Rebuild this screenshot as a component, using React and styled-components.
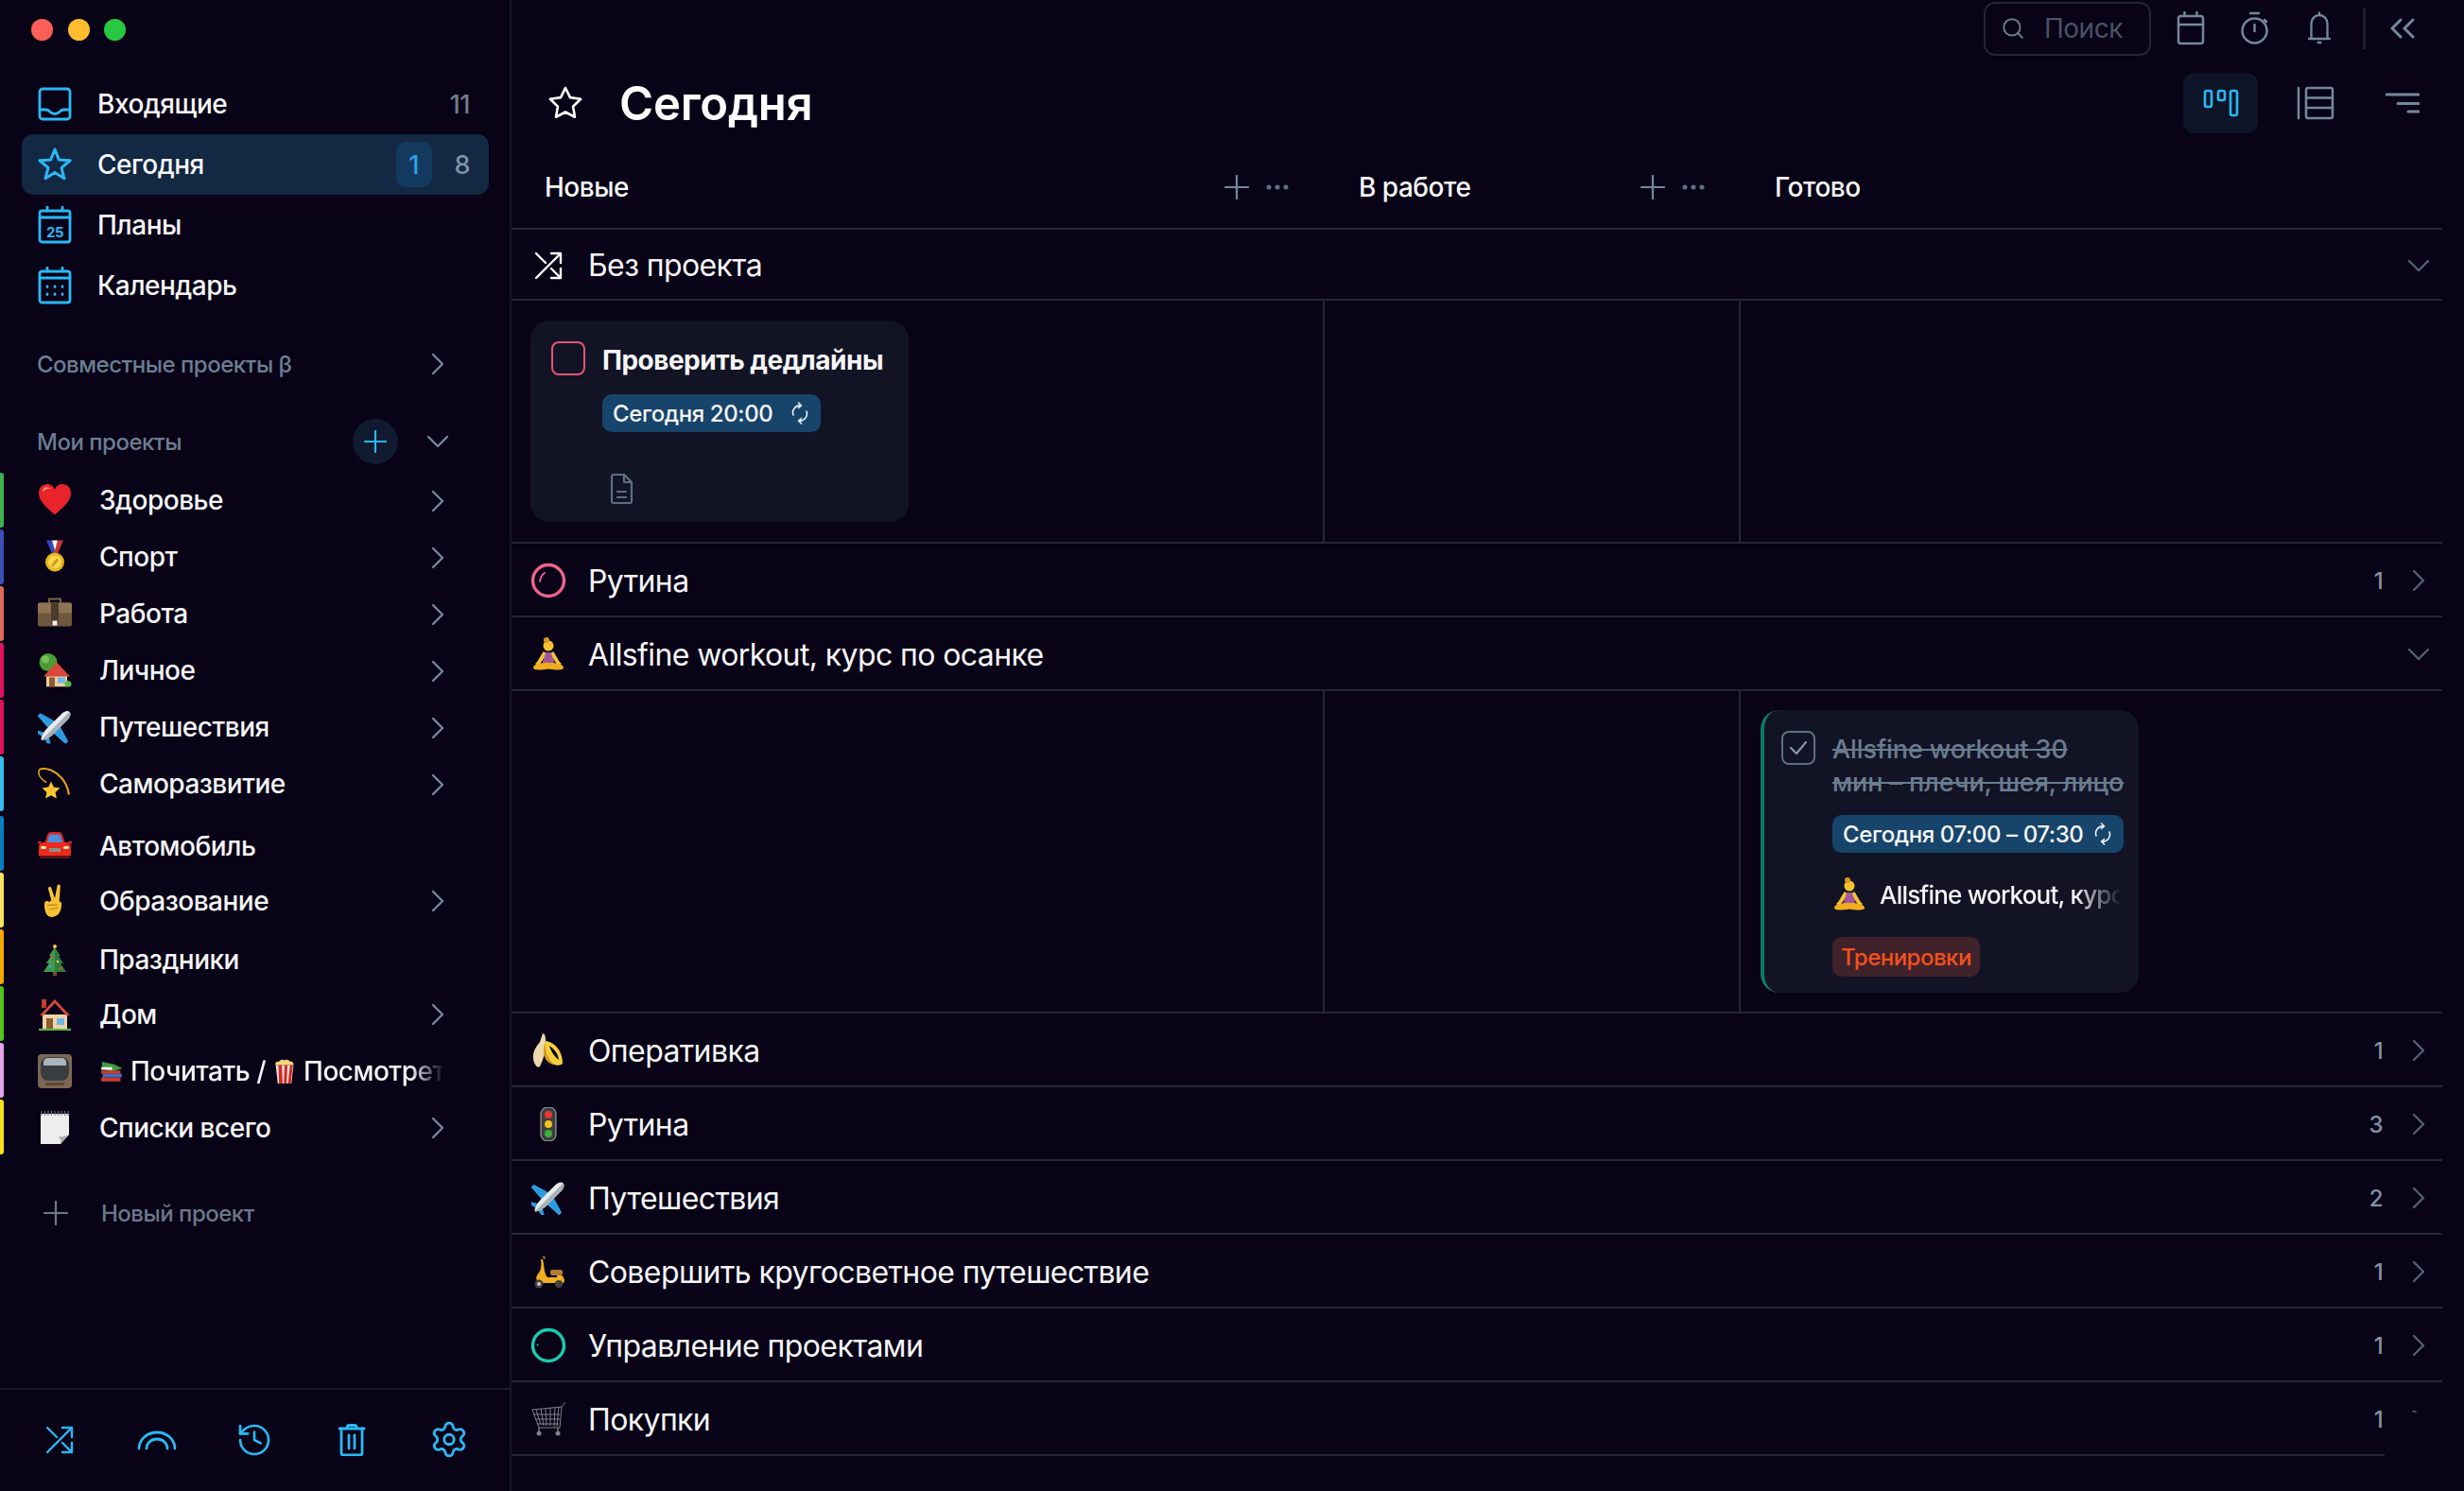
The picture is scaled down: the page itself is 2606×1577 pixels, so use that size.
import React from "react";
import styled, { createGlobalStyle } from "styled-components";
import { History, Settings, Search } from "lucide-react";

const CYAN = "#2bb8f4";
const GREY = "#75889b";
const LINE = "#25263a";

const GlobalStyle = createGlobalStyle`
  html, body { margin: 0; padding: 0; background: #080317; }
  * { box-sizing: border-box; }
  body { font-family: Inter, "Noto Sans", sans-serif; color: #f6f6f8; letter-spacing: -0.5px; }
`;

const starPoints = (cx, cy, R, r) =>
  Array.from({ length: 10 }, (_, i) => {
    const rad = i % 2 ? r : R;
    const a = (Math.PI / 5) * i - Math.PI / 2;
    return `${(cx + rad * Math.cos(a)).toFixed(2)},${(cy + rad * Math.sin(a)).toFixed(2)}`;
  }).join(" ");

/* ---- line icons ---- */
const Line = styled.svg`
  display: block;
  flex: none;
  fill: none;
  stroke: ${({ $c }) => $c || GREY};
  stroke-width: ${({ $w }) => $w || 2.5};
  stroke-linecap: round;
  stroke-linejoin: round;
`;

const Ico = ({ w = 34, h = w, c, sw, children }) => (
  <Line width={w} height={h} viewBox={`0 0 ${w} ${h}`} $c={c} $w={sw}>
    {children}
  </Line>
);

const InboxIcon = () => (
  <Ico w={36} h={36} c={CYAN} sw={2.8}>
    <rect x="2" y="2" width="32" height="32" rx="3" />
    <path d="M2 24h7c3.500 0 4 4.500 9 4.500s5.500-4.500 9-4.500h7" />
  </Ico>
);
const StarIcon = () => (
  <Ico w={38} h={38} c={CYAN} sw={3}>
    <polygon points={starPoints(19, 20, 17, 7.4)} />
  </Ico>
);
const Twenty = styled.text`
  fill: ${CYAN};
  stroke: none;
  font: 700 15px Inter, sans-serif;
  text-anchor: middle;
`;
const PlansIcon = () => (
  <Ico w={36} h={40} c={CYAN} sw={2.8}>
    <rect x="2" y="5" width="32" height="33" rx="2.500" />
    <path d="M2 12h32M10 1v4M26 1v4" />
    <Twenty x="18" y="33">25</Twenty>
  </Ico>
);
const CalendarIcon = () => (
  <Ico w={36} h={40} c={CYAN} sw={2.8}>
    <rect x="2" y="5" width="32" height="33" rx="2.500" />
    <path d="M2 12h32M10 1v4M26 1v4" />
    <path d="M10 21v.5M18 21v.5M26 21v.5M10 29v.5M18 29v.5M26 29v.5" />
  </Ico>
);
const ShuffleIcon = ({ c }) => (
  <Ico w={30} h={30} c={c} sw={2.4}>
    <path d="M2 28 28 2M18 2h10v10M2 2l10 10M18 18l10 10M28 18v10H18" />
  </Ico>
);
const RainbowIcon = () => (
  <Ico w={42} h={22} c={CYAN} sw={2.8}>
    <path d="M2 20a19 17 0 0 1 38 0M10 20a11 10 0 0 1 22 0" />
  </Ico>
);
const TrashIcon = () => (
  <Ico w={30} h={34} c={CYAN} sw={2.8}>
    <path d="M2 5h26M10 4c0-2 1-2.500 2-2.500h6c1 0 2 .5 2 2.500" />
    <path d="M4 5v26a2 2 0 0 0 2 2h18a2 2 0 0 0 2-2V5" />
    <path d="M12 12v14M18 12v14" />
  </Ico>
);
const ChevronRight = () => (
  <Ico w={14} h={24} c={GREY} sw={2.4}>
    <path d="M2 2l10 10L2 22" />
  </Ico>
);
const ChevronDown = ({ c }) => (
  <Ico w={24} h={14} c={c || GREY} sw={2.4}>
    <path d="M2 2l10 10L22 2" />
  </Ico>
);
const ChevronStub = () => (
  <Ico w={24} h={24} c={GREY} sw={1.6}>
    <path d="M6 3.500l3 1" />
  </Ico>
);
const Cross = ({ s = 26, c = GREY, sw = 2.2 }) => (
  <Ico w={s} h={s} c={c} sw={sw}>
    <path d={`M${s / 2} 1v${s - 2}M1 ${s / 2}h${s - 2}`} />
  </Ico>
);
const Dots = () => (
  <Ico w={24} h={8} c="#5f7082" sw={5}>
    <path d="M3 4h.01M12 4h.01M21 4h.01" />
  </Ico>
);
const SyncIcon = () => (
  <Ico w={20} h={24} c="#eaf2f8" sw={1.6}>
    <path d="M3 14a7.500 7.500 0 0 1 8-10M8.500 1l3 3-3 2.500" />
    <path d="M17 10a7.500 7.500 0 0 1-8 10M11.500 23l-3-3 3-2.500" />
  </Ico>
);
const DocIcon = () => (
  <Ico w={25} h={32} c="#5e6e80" sw={2.2}>
    <path d="M2 3a2 2 0 0 1 2-2h11l8 8v20a2 2 0 0 1-2 2H4a2 2 0 0 1-2-2z" />
    <path d="M15 1v8h8M8 19h9M8 25h9" />
  </Ico>
);
const TopCalendar = () => (
  <Ico w={30} h={36}>
    <rect x="2" y="5" width="26" height="29" rx="2.500" />
    <path d="M2 14h26M8.500 1v4M21.500 1v4" />
  </Ico>
);
const StopwatchIcon = () => (
  <Ico w={32} h={36}>
    <circle cx="15.500" cy="20.500" r="13" />
    <path d="M11 2h9M15.500 14v7M26 9l2 2" />
  </Ico>
);
const BellIcon = () => (
  <Ico w={28} h={36} sw={2.3}>
    <path d="M3 29h22M5.500 29V13a8.500 9 0 0 1 17 0v16M14 1.500v2M12.500 33h3" />
  </Ico>
);
const CollapseIcon = () => (
  <Ico w={28} h={24} sw={3}>
    <path d="M12 3l-9 9 9 9M25 3l-9 9 9 9" />
  </Ico>
);
const KanbanIcon = () => (
  <Ico w={38} h={30} c={CYAN} sw={2.6}>
    <rect x="2" y="2" width="7" height="17" rx="2" />
    <rect x="16" y="2" width="7" height="10" rx="2" />
    <rect x="29" y="2" width="7" height="26" rx="2" />
  </Ico>
);
const ListIcon = () => (
  <Ico w={40} h={36}>
    <path d="M2 2v32" />
    <rect x="10" y="2" width="28" height="32" rx="2" />
    <path d="M10 12.500h28M10 23h28" />
  </Ico>
);
const FilterIcon = () => (
  <Ico w={36} h={24} sw={3}>
    <path d="M1 3h34M13 12.500h22M24 21h11" />
  </Ico>
);

/* ---- emoji drawn by hand, no colour emoji font in the sandbox ---- */
const EmojiSvg = styled.svg`
  display: block;
  flex: none;
`;
const Em = ({ s = 36, children }) => (
  <EmojiSvg width={s} height={s} viewBox="0 0 36 36">
    {children}
  </EmojiSvg>
);

const Heart = () => (
  <Em>
    <path d="M18 34C8 25 1 19 1 11 1 5 5.500 1.500 10 1.500c4 0 7 2.500 8 6 1-3.500 4-6 8-6 4.500 0 9 3.500 9 9.500 0 8-7 14-17 23z" fill="#e8232a" />
    <path d="M6 6c3-2.500 7-1 8 1-3-1-6-.5-8 2.500-1 1-1-2 0-3.500z" fill="#ff8a80" />
  </Em>
);
const Medal = () => (
  <Em>
    <path d="M9 1h6l4 14h-4z" fill="#2f49b5" />
    <path d="M27 1h-6l-4 14h4z" fill="#c8342d" />
    <path d="M15 1h6l-3 11z" fill="#f4f4f4" />
    <circle cx="18" cy="24" r="10" fill="#e6b520" />
    <circle cx="18" cy="24" r="7" fill="#f7d64a" />
    <path d="M14 28l6-8 2 2-6 7z" fill="#c9981a" />
  </Em>
);
const Briefcase = () => (
  <Em>
    <path d="M12 7V3h12v4" fill="none" stroke="#7a6248" strokeWidth="2" />
    <rect x="0" y="7" width="36" height="25" rx="2" fill="#6e573c" />
    <rect x="0" y="7" width="36" height="11" rx="2" fill="#8e7454" />
    <rect x="14" y="7" width="8" height="23" fill="#4c3b29" />
    <rect x="15.500" y="26" width="5" height="5" fill="#eee" />
  </Em>
);
const TreeHouse = () => (
  <Em>
    <circle cx="11" cy="10" r="9.500" fill="#4c9a35" />
    <circle cx="8" cy="7" r="4" fill="#73c155" />
    <path d="M9 36V24h22v12z" fill="#f0cf9f" />
    <path d="M20 10l14 15H6z" fill="#d9483b" />
    <rect x="12" y="26" width="6" height="10" fill="#8d5a32" />
    <rect x="21" y="26" width="8" height="6" fill="#6cb8ea" />
    <circle cx="32" cy="33" r="3.500" fill="#5eb547" />
  </Em>
);
const Plane = () => (
  <Em>
    <g transform="rotate(45 18 18)">
      <path d="M14 14L-3 19v4l17 1zM22 14l17 5v4l-17 1z" fill="#2b9be0" />
      <path d="M15 30l-7 4v3l8-2zM21 30l7 4v3l-8-2z" fill="#2b9be0" />
      <path d="M18-4c3 0 4.500 4 4.500 8v22c0 4-2.500 12-4.500 12s-4.500-8-4.500-12V4c0-4 1.500-8 4.500-8z" fill="#e8eaec" />
      <path d="M18 38c2 0 4.500-8 4.500-12V4c0-4-1.500-8-4.500-8z" fill="#a9b0b7" />
    </g>
  </Em>
);
const Dizzy = () => (
  <Em>
    <path d="M2 3c12-3 28 8 31 27" fill="none" stroke="#eea71a" strokeWidth="2" />
    <path d="M2 3c-3 5 1 11 7 14" fill="none" stroke="#eea71a" strokeWidth="1.500" />
    <polygon points={starPoints(14, 26, 10, 4.800)} fill="#fbc531" />
  </Em>
);
const Car = () => (
  <Em>
    <path d="M7 15l3-9c.5-2 2-3 4-3h8c2 0 3.500 1 4 3l3 9z" fill="#d8241c" />
    <path d="M9.500 15l2.500-8c.3-1 1-1.500 2-1.500h8c1 0 1.700.5 2 1.500l2.500 8z" fill="#4f8fd9" />
    <path d="M1 19c0-3 3-5 6-5h22c3 0 6 2 6 5v9H1z" fill="#ee2a1f" />
    <rect x="12" y="20" width="12" height="4" fill="#8d8d8d" />
    <rect x="3" y="18" width="6" height="3" rx="1.500" fill="#ffe9a8" />
    <rect x="27" y="18" width="6" height="3" rx="1.500" fill="#ffe9a8" />
    <rect x="2" y="28" width="32" height="3" fill="#5a1512" />
    <rect x="0" y="13" width="4" height="2.500" fill="#d8241c" />
    <rect x="32" y="13" width="4" height="2.500" fill="#d8241c" />
  </Em>
);
const Victory = () => (
  <Em>
    <path d="M15 20L11 5c-.6-2 2.500-3 3.200-1L18 15l2.500-13c.4-2.200 3.500-1.800 3.300.5L22.500 20z" fill="#f7c232" />
    <path d="M7 21c0-3 3-4 5-2l1-1c2-1 11-1 12 2 .5 5-1 14-10 15-5 0-8-4-8-14z" fill="#f7c232" />
    <path d="M10 23c3-2 8 0 11-1M12 27c3-1 6-.5 9-2" fill="none" stroke="#b8801a" strokeWidth="1.200" />
  </Em>
);
const Tree = () => (
  <Em>
    <rect x="16" y="30" width="4" height="5" fill="#7a4a26" />
    <path d="M18 5l6 9h-2l5 8h-3l6 9H6l6-9H9l5-8h-2z" fill="#2f7d3e" />
    <path d="M18 5v26H6l6-9H9l5-8h-2z" fill="#3f9a4d" />
    <circle cx="18" cy="4" r="2" fill="#f7c940" />
    <circle cx="15" cy="15" r="1.300" fill="#e94b3c" />
    <circle cx="21" cy="20" r="1.300" fill="#f7c940" />
    <circle cx="13" cy="25" r="1.300" fill="#4aa3e8" />
    <circle cx="24" cy="27" r="1.300" fill="#e94b3c" />
  </Em>
);
const House = () => (
  <Em>
    <rect x="4" y="2" width="5" height="9" fill="#c63c30" />
    <path d="M5 18h26v16H5z" fill="#f2d3a6" />
    <path d="M18 2l16 17h-4L18 6 6 19H2z" fill="#d9483b" />
    <rect x="9" y="22" width="7" height="12" fill="#8d5a32" />
    <rect x="20" y="22" width="8" height="7" fill="#6cb8ea" />
    <rect x="1" y="33" width="34" height="2" fill="#5eb547" />
  </Em>
);
const Tv = () => (
  <Em>
    <rect x="0" y="0" width="36" height="36" rx="4" fill="#7d6653" />
    <rect x="3" y="3" width="30" height="25" rx="8" fill="#3a3d40" />
    <path d="M6 9c0-3 2-5 5-5h14c3 0 5 2 5 5v3H6z" fill="#a9b6bd" />
    <rect x="8" y="30" width="20" height="3" rx="1" fill="#5a4838" />
  </Em>
);
const Notepad = () => (
  <Em>
    <path d="M3 3h30v22l-9 10H3z" fill="#ededed" />
    <path d="M33 25l-9 10c1-4 0-7-4-8 5 1 9 0 13-2z" fill="#a9a9a9" />
    <path d="M4 0v5M7.500 0v5M11 0v5M14.500 0v5M18 0v5M21.500 0v5M25 0v5M28.500 0v5M32 0v5" stroke="#777" strokeWidth="1" />
  </Em>
);
const Books = () => (
  <Em s={26}>
    <path d="M4 4l18 4 12 6-16 5L4 13z" fill="#3f9a3c" />
    <rect x="3" y="17" width="28" height="5" fill="#c63c30" />
    <rect x="5" y="22" width="28" height="5" fill="#3a6fc4" />
    <rect x="3" y="27" width="28" height="6" fill="#c63c30" />
    <rect x="3" y="12" width="16" height="4" fill="#f2f2f2" />
  </Em>
);
const Popcorn = () => (
  <Em s={26}>
    <path d="M5 9c-2-4 3-6 5-5 1-3 6-4 8-2 3-2 7 0 8 2 3-1 6 2 5 5z" fill="#f7d67a" />
    <path d="M5 9h26l-3 27H8z" fill="#e4e0dc" />
    <path d="M9 9h5l1 27h-5zM18 9h4l-1 27h-4zM26 9h4l-3 27h-4z" fill="#d8261d" />
  </Em>
);
const Lotus = () => (
  <Em>
    <circle cx="18" cy="9" r="5.500" fill="#f7c232" />
    <circle cx="16" cy="3" r="3" fill="#d99a1a" />
    <path d="M13.500 16h9l1.500 11h-12z" fill="#a0569e" />
    <path d="M13 15c-3 3-5 10-9 13l3 2c4-3 7-9 8-13zM23 15c3 3 5 10 9 13l-3 2c-4-3-7-9-8-13z" fill="#f7c232" />
    <path d="M2 32c0-3 6-5 16-5s16 2 16 5-6 3-16 1.500C8 35 2 35 2 32z" fill="#f0ad1e" />
  </Em>
);
const Banana = () => (
  <Em>
    <path d="M12 0c2 0 3 3 3 7 1 8-1 18-6 28-3 2-6-2-7-8-1-7 3-13 7-18z" fill="#eed9ac" />
    <path d="M15 8c8 1 18 9 18 24-2 2-6 2-9 1-8-3-11-13-9-25z" fill="#f7cf3d" />
    <path d="M19 13c4 3 9 7 10 15-4-3-8-8-10-15z" fill="#080317" />
    <path d="M15 8c-1 10 2 19 9 25-7-1-12-7-11-17z" fill="#d39a1f" />
  </Em>
);
const TrafficLight = () => (
  <Em>
    <rect x="10" y="0" width="16" height="36" rx="7" fill="#3c3f3d" stroke="#b7b7b7" strokeWidth="1" />
    <circle cx="18" cy="8" r="4" fill="#e5372d" />
    <circle cx="18" cy="18" r="4" fill="#f4c21f" />
    <circle cx="18" cy="28" r="4" fill="#3eae3a" />
  </Em>
);
const Scooter = () => (
  <Em>
    <path d="M12 1l3 1v3l-3-1z" fill="#8b5a2b" />
    <path d="M12 5c2 7 1 15 5 19h10v-4c4 0 8 3 8 8l-1 2H12C5 30 3 24 8 19c2-2 3-8 2-14z" fill="#f0ad1e" />
    <rect x="20" y="16" width="13" height="6" rx="2" fill="#b57b35" />
    <circle cx="8" cy="31" r="4.500" fill="#45403a" />
    <circle cx="8" cy="31" r="2" fill="#cfcfcf" />
    <circle cx="29" cy="31" r="4" fill="#45403a" />
  </Em>
);
const CartGrid = styled.path`
  fill: none;
  stroke: #8c8f92;
  stroke-width: 0.9;
`;
const Cart = () => (
  <Em>
    <CartGrid d="M36 0l-4 5-2 22H8L1 8l31-3M5 8l5 16M10 7l3 18M15 7l1 18M20 6v19M25 6l-1 20M29 5l-2 21M2 13h28M4 18h26M6 23h23" />
    <circle cx="8" cy="33" r="2.500" fill="#7f8386" />
    <circle cx="28" cy="33" r="2.500" fill="#7f8386" />
    <path d="M8 27v4M28 27v4" stroke="#8c8f92" strokeWidth="1.200" />
  </Em>
);
const PinkRing = () => (
  <Ico w={38} h={38} c="#f0628c" sw={3.4}>
    <circle cx="19" cy="19" r="16.500" />
    <path d="M10 20c.5-4 2-7 5-9" strokeWidth="1.800" />
  </Ico>
);
const TealRing = () => (
  <Ico w={38} h={38} c="#19cdb0" sw={3.4}>
    <circle cx="19" cy="19" r="16.500" />
    <path d="M7.500 18.500h.01" strokeWidth="2" />
  </Ico>
);

/* ---- layout ---- */
const Page = styled.div`
  display: flex;
  width: 2606px;
  height: 1577px;
  overflow: hidden;
  background: #080317;
`;

const Sidebar = styled.aside`
  display: flex;
  flex-direction: column;
  flex: none;
  width: 541px;
  border-right: 2px solid #171727;
`;
const Traffic = styled.div`
  display: flex;
  align-items: center;
  gap: 15.5px;
  height: 62px;
  padding: 0 0 0 33px;
  flex: none;
`;
const Light = styled.span`
  width: 23px;
  height: 23px;
  border-radius: 50%;
  background: ${({ $c }) => $c};
`;
const Nav = styled.nav`
  margin-top: 16px;
  padding: 0 22px 0 23px;
`;
const NavRow = styled.div`
  display: flex;
  align-items: center;
  height: 64px;
  padding: 0 20px 0 17px;
  border-radius: 12px;
  background: ${({ $active }) => ($active ? "#132842" : "transparent")};
  font-size: 28px;
  font-weight: 500;
`;
const NavIcon = styled.span`
  display: flex;
  justify-content: center;
  width: 36px;
  margin-right: 27px;
`;
const NavCount = styled.span`
  margin-left: ${({ $flush }) => ($flush ? 0 : "auto")};
  font-size: 27px;
  color: ${({ $flush }) => ($flush ? "#7f93a8" : "#6f7d8c")};
`;
const NavBadge = styled.span`
  display: flex;
  align-items: center;
  justify-content: center;
  margin-left: auto;
  margin-right: 24px;
  width: 38px;
  height: 48px;
  border-radius: 10px;
  background: #14395e;
  color: #2aa5e6;
  font-size: 27px;
`;
const SectionRow = styled.div`
  display: flex;
  align-items: center;
  height: 48px;
  padding: 0 ${({ $pr }) => $pr || 69}px 0 39px;
  margin-top: ${({ $mt }) => $mt}px;
  color: #6c7e92;
  font-size: 24px;
  font-weight: 500;
  flex: none;
`;
const SectionAction = styled.span`
  display: flex;
  align-items: center;
  justify-content: center;
  width: 48px;
  height: 48px;
  border-radius: 50%;
  background: #101a30;
  margin-left: auto;
  margin-right: 30px;
`;
const PushEnd = styled.span`
  margin-left: auto;
  display: flex;
`;
const Projects = styled.div`
  margin-top: 9px;
  flex: none;
`;
const ProjectRow = styled.div`
  display: flex;
  align-items: center;
  height: 60px;
  padding-right: 69px;
  margin-top: ${({ $mt }) => $mt || 0}px;
  font-size: 28px;
  font-weight: 500;
`;
const ColorBar = styled.span`
  width: 4px;
  height: 58px;
  align-self: flex-start;
  border-radius: 0 3px 3px 0;
  background: ${({ $c }) => $c};
  margin-right: 36px;
  flex: none;
`;
const ProjectIcon = styled.span`
  display: flex;
  justify-content: center;
  width: 36px;
  margin-right: 29px;
  flex: none;
  transform: translateY(${({ $dy }) => $dy || 0}px);
`;
const ProjectName = styled.span`
  transform: translateY(${({ $dy }) => $dy || 0}px);
`;
const FadeName = styled.span`
  display: flex;
  align-items: center;
  gap: 7px;
  width: 380px;
  overflow: hidden;
  white-space: nowrap;
  -webkit-mask-image: linear-gradient(90deg, #000 90%, transparent 100%);
  mask-image: linear-gradient(90deg, #000 90%, transparent 100%);
`;
const NewProject = styled.div`
  display: flex;
  align-items: center;
  height: 50px;
  margin-top: 35px;
  padding-left: 46px;
  color: #6d7787;
  font-size: 24px;
  font-weight: 500;
  gap: 35px;
  flex: none;
`;
const SideFooter = styled.div`
  display: flex;
  justify-content: space-between;
  align-items: center;
  margin-top: auto;
  height: 109px;
  padding: 0 43px 2px 42px;
  border-top: 2px solid #1a1a2b;
  flex: none;
`;
const FootSlot = styled.span`
  display: flex;
  justify-content: center;
  width: 42px;
`;

const Main = styled.main`
  flex: 1;
  display: flex;
  flex-direction: column;
  min-width: 0;
`;
const TopBar = styled.div`
  display: flex;
  align-items: center;
  justify-content: flex-end;
  height: 60px;
  padding-right: 26px;
  flex: none;
`;
const SearchBox = styled.div`
  display: flex;
  align-items: center;
  width: 177px;
  height: 57px;
  padding-left: 16px;
  gap: 20px;
  margin-right: 8px;
  border: 2px solid #232536;
  border-radius: 12px;
  color: #4a5164;
  font-size: 28px;
`;
const TopSlot = styled.span`
  display: flex;
  justify-content: center;
  width: ${({ $w }) => $w || 68}px;
`;
const TopDivider = styled.span`
  width: 3px;
  height: 44px;
  margin-left: 12px;
  background: #1e2032;
`;
const Header = styled.header`
  display: flex;
  align-items: center;
  height: 98px;
  padding: 0 34px 0 38px;
  flex: none;
`;
const Title = styled.h1`
  margin: 0 0 0 38px;
  font-size: 49px;
  font-weight: 600;
  letter-spacing: -0.2px;
  color: #fff;
`;
const ViewActive = styled.span`
  display: flex;
  align-items: center;
  justify-content: center;
  margin-left: auto;
  width: 79px;
  height: 64px;
  border-radius: 12px;
  background: #0e1529;
`;
const Columns = styled.div`
  display: grid;
  grid-template-columns: 859px 440px 1fr;
  height: 85px;
  margin-right: 23px;
  padding-bottom: 4px;
  border-bottom: 2px solid ${LINE};
  flex: none;
`;
const ColumnHead = styled.div`
  display: flex;
  align-items: center;
  padding: 0 37px 0 ${({ $first }) => ($first ? 35 : 37)}px;
  font-size: 28px;
  font-weight: 500;
`;
const ColumnActions = styled.div`
  display: flex;
  align-items: center;
  gap: 18px;
  margin-left: auto;
`;
const Board = styled.div`
  display: flex;
  flex-direction: column;
  margin-right: 23px;
`;
const GroupRow = styled.div`
  display: flex;
  align-items: center;
  height: ${({ $h }) => $h || 78}px;
  padding: 0 13px 0 21px;
  font-size: 32px;
  font-weight: 400;
  letter-spacing: -0.6px;
  flex: none;
  background: linear-gradient(${LINE}, ${LINE}) left bottom / ${({ $cut }) => ($cut ? "calc(100% - 61px)" : "100%")} 2px no-repeat;
`;
const GroupIcon = styled.span`
  display: flex;
  justify-content: center;
  width: 36px;
  margin-right: 24px;
  flex: none;
`;
const GroupCount = styled.span`
  margin-left: auto;
  margin-right: 26px;
  font-size: 24px;
  font-weight: 500;
  color: #8391a3;
`;
const RowToggle = styled.span`
  display: flex;
  justify-content: center;
  width: 24px;
  margin-left: ${({ $auto }) => ($auto ? "auto" : 0)};
  opacity: 0.7;
`;
const Lane = styled.div`
  display: grid;
  grid-template-columns: 858px 440px 1fr;
  height: ${({ $h }) => $h}px;
  flex: none;
  border-bottom: 2px solid ${LINE};
`;
const Cell = styled.div`
  padding: ${({ $top }) => $top || 20}px 21px ${({ $top }) => $top || 20}px ${({ $left }) => $left || 21}px;
  border-left: ${({ $line }) => ($line ? `2px solid ${LINE}` : "none")};
`;
const Card = styled.div`
  display: flex;
  width: 400px;
  height: ${({ $h }) => $h}px;
  padding: 22px 16px 0 ${({ $done }) => ($done ? 18 : 22)}px;
  border-radius: 20px;
  background: #121426;
  border-left: ${({ $done }) => ($done ? "4px solid #0b7a63" : "none")};
`;
const Check = styled.span`
  display: flex;
  align-items: center;
  justify-content: center;
  width: 36px;
  height: 36px;
  margin-right: 18px;
  border: 2.5px solid ${({ $c }) => $c};
  border-radius: 8px;
  flex: none;
`;
const CardBody = styled.div`
  display: flex;
  flex-direction: column;
  align-items: flex-start;
  min-width: 0;
  flex: 1;
`;
const CardTitle = styled.div`
  font-size: 28px;
  line-height: 40px;
  font-weight: 700;
  white-space: nowrap;
`;
const DoneTitle = styled.div`
  font-size: 27px;
  line-height: 35px;
  font-weight: 500;
  letter-spacing: -0.1px;
  color: #6b7c90;
  text-decoration: line-through;
  white-space: nowrap;
  margin-top: 2px;
`;
const Chip = styled.div`
  display: flex;
  align-items: center;
  justify-content: space-between;
  height: 40px;
  padding: 0 12px 0 11px;
  margin-top: ${({ $wide }) => ($wide ? 17 : 16)}px;
  gap: 8px;
  width: ${({ $wide }) => ($wide ? "100%" : "231px")};
  border-radius: 10px;
  background: #17446b;
  font-size: 24px;
  font-weight: 500;
  letter-spacing: -0.4px;
  white-space: nowrap;
`;
const DocSlot = styled.div`
  margin: 44px 0 0 8px;
`;
const CardProject = styled.div`
  display: flex;
  align-items: center;
  gap: 14px;
  width: 100%;
  height: 40px;
  margin-top: 24px;
  font-size: 26px;
  font-weight: 500;
  letter-spacing: -0.8px;
  white-space: nowrap;
  overflow: hidden;
`;
const CardProjectName = styled.span`
  overflow: hidden;
  -webkit-mask-image: linear-gradient(90deg, #000 80%, transparent 99%);
  mask-image: linear-gradient(90deg, #000 80%, transparent 99%);
`;
const Tag = styled.div`
  display: flex;
  align-items: center;
  height: 42px;
  margin-top: 25px;
  padding: 0 9px;
  border-radius: 10px;
  background: #40222a;
  color: #f4511e;
  font-size: 24px;
  font-weight: 500;
`;

const projects = [
  { c: "#3db04c", icon: Heart, name: "Здоровье", more: true, dy: -1.5 },
  { c: "#3d4fb5", icon: Medal, name: "Спорт", more: true, dy: -1.5 },
  { c: "#e06a5a", icon: Briefcase, name: "Работа", more: true, dy: -1.5 },
  { c: "#e0125f", icon: TreeHouse, name: "Личное", more: true, dy: -1.5 },
  { c: "#e0125f", icon: Plane, name: "Путешествия", more: true, dy: -1.5 },
  { c: "#35bdf2", icon: Dizzy, name: "Саморазвитие", more: true, dy: -1.5 },
  { c: "#0a7fc0", icon: Car, name: "Автомобиль", dy: 2, mt: 3 },
  { c: "#f5e35a", icon: Victory, name: "Образование", more: true },
  { c: "#f5a800", icon: Tree, name: "Праздники", dy: 2 },
  { c: "#52c41a", icon: House, name: "Дом", more: true },
  { c: "#e3a3e8", icon: Tv, name: "mixed" },
  { c: "#f7e020", icon: Notepad, name: "Списки всего", more: true },
];

const lowerGroups = [
  { icon: Banana, name: "Оперативка", n: 1 },
  { icon: TrafficLight, name: "Рутина", n: 3 },
  { icon: Plane, name: "Путешествия", n: 2 },
  { icon: Scooter, name: "Совершить кругосветное путешествие", n: 1 },
  { icon: TealRing, name: "Управление проектами", n: 1 },
  { icon: Cart, name: "Покупки", n: 1, cut: true },
];

export default function App() {
  return (
    <Page>
      <GlobalStyle />
      <Sidebar>
        <Traffic>
          <Light $c="#ff5f57" />
          <Light $c="#febc2e" />
          <Light $c="#28c840" />
        </Traffic>
        <Nav>
          <NavRow>
            <NavIcon><InboxIcon /></NavIcon>
            Входящие
            <NavCount>11</NavCount>
          </NavRow>
          <NavRow $active>
            <NavIcon><StarIcon /></NavIcon>
            Сегодня
            <NavBadge>1</NavBadge>
            <NavCount $flush>8</NavCount>
          </NavRow>
          <NavRow>
            <NavIcon><PlansIcon /></NavIcon>
            Планы
          </NavRow>
          <NavRow>
            <NavIcon><CalendarIcon /></NavIcon>
            Календарь
          </NavRow>
        </Nav>
        <SectionRow $mt={27}>
          Совместные проекты β
          <PushEnd><ChevronRight /></PushEnd>
        </SectionRow>
        <SectionRow $mt={34} $pr={64}>
          Мои проекты
          <SectionAction><Cross s={24} c={CYAN} /></SectionAction>
          <ChevronDown />
        </SectionRow>
        <Projects>
          {projects.map((p) => (
            <ProjectRow key={p.c + p.name} $mt={p.mt}>
              <ColorBar $c={p.c} />
              <ProjectIcon $dy={p.dy}><p.icon /></ProjectIcon>
              {p.name === "mixed" ? (
                <FadeName>
                  <Books /> Почитать / <Popcorn /> Посмотреть
                </FadeName>
              ) : (
                <ProjectName $dy={p.dy}>{p.name}</ProjectName>
              )}
              {p.more && <PushEnd><ChevronRight /></PushEnd>}
            </ProjectRow>
          ))}
        </Projects>
        <NewProject>
          <Cross c="#6d7787" />
          Новый проект
        </NewProject>
        <SideFooter>
          <FootSlot><ShuffleIcon c={CYAN} /></FootSlot>
          <FootSlot><RainbowIcon /></FootSlot>
          <FootSlot><History size={40} color={CYAN} strokeWidth={1.6} /></FootSlot>
          <FootSlot><TrashIcon /></FootSlot>
          <FootSlot><Settings size={43} color={CYAN} strokeWidth={1.6} /></FootSlot>
        </SideFooter>
      </Sidebar>

      <Main>
        <TopBar>
          <SearchBox>
            <Search size={26} color="#6d7a8a" strokeWidth={1.8} />
            Поиск
          </SearchBox>
          <TopSlot><TopCalendar /></TopSlot>
          <TopSlot><StopwatchIcon /></TopSlot>
          <TopSlot><BellIcon /></TopSlot>
          <TopDivider />
          <TopSlot $w={78}><CollapseIcon /></TopSlot>
        </TopBar>
        <Header>
          <Ico w={38} h={38} c="#fff" sw={2.6}>
            <polygon points={starPoints(19, 20, 17, 8.500)} />
          </Ico>
          <Title>Сегодня</Title>
          <ViewActive><KanbanIcon /></ViewActive>
          <TopSlot $w={122}><ListIcon /></TopSlot>
          <TopSlot $w={62}><FilterIcon /></TopSlot>
        </Header>
        <Columns>
          <ColumnHead $first>
            Новые
            <ColumnActions><Cross /><Dots /></ColumnActions>
          </ColumnHead>
          <ColumnHead>
            В работе
            <ColumnActions><Cross /><Dots /></ColumnActions>
          </ColumnHead>
          <ColumnHead>Готово</ColumnHead>
        </Columns>
        <Board>
          <GroupRow $h={75}>
            <GroupIcon><ShuffleIcon c="#fff" /></GroupIcon>
            Без проекта
            <RowToggle $auto><ChevronDown /></RowToggle>
          </GroupRow>
          <Lane $h={257}>
            <Cell $top={21} $left={20}>
              <Card $h={213}>
                <Check $c="#e8566f" />
                <CardBody>
                  <CardTitle>Проверить дедлайны</CardTitle>
                  <Chip>
                    Сегодня 20:00
                    <SyncIcon />
                  </Chip>
                  <DocSlot><DocIcon /></DocSlot>
                </CardBody>
              </Card>
            </Cell>
            <Cell $line />
            <Cell $line />
          </Lane>
          <GroupRow>
            <GroupIcon><PinkRing /></GroupIcon>
            Рутина
            <GroupCount>1</GroupCount>
            <RowToggle><ChevronRight /></RowToggle>
          </GroupRow>
          <GroupRow>
            <GroupIcon><Lotus /></GroupIcon>
            Allsfine workout, курс по осанке
            <RowToggle $auto><ChevronDown /></RowToggle>
          </GroupRow>
          <Lane $h={341}>
            <Cell />
            <Cell $line />
            <Cell $line>
              <Card $done $h={299}>
                <Check $c="#5e7082">
                  <Ico w={20} h={16} c="#8a9bad" sw={2}>
                    <path d="M2 8l6 6L18 2" />
                  </Ico>
                </Check>
                <CardBody>
                  <DoneTitle>
                    Allsfine workout 30
                    <br />
                    мин – плечи, шея, лицо
                  </DoneTitle>
                  <Chip $wide>
                    Сегодня 07:00 – 07:30
                    <SyncIcon />
                  </Chip>
                  <CardProject>
                    <Lotus />
                    <CardProjectName>Allsfine workout, курс по осанке</CardProjectName>
                  </CardProject>
                  <Tag>Тренировки</Tag>
                </CardBody>
              </Card>
            </Cell>
          </Lane>
          {lowerGroups.map((g) => (
            <GroupRow key={g.name + g.n} $cut={g.cut}>
              <GroupIcon><g.icon /></GroupIcon>
              {g.name}
              <GroupCount>{g.n}</GroupCount>
              <RowToggle>{g.cut ? <ChevronStub /> : <ChevronRight />}</RowToggle>
            </GroupRow>
          ))}
        </Board>
      </Main>
    </Page>
  );
}
